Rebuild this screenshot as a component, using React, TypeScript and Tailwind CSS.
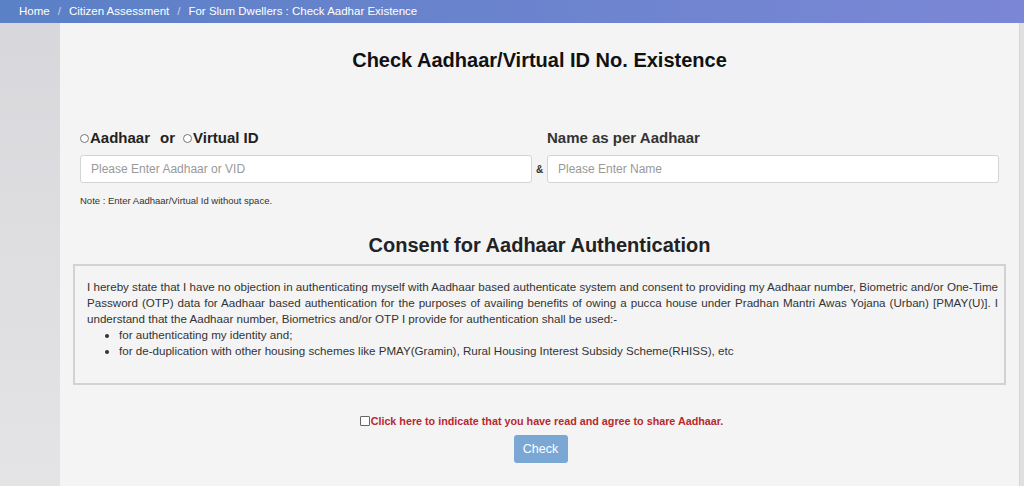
export default function App() {
  return (
    <div className="flex flex-col w-[1024px] h-[486px] overflow-hidden bg-[#dcdcdf] font-['Liberation_Sans',Arial,sans-serif]">
      <div className="flex items-center h-[23px] px-[19px] bg-gradient-to-r from-[#5a80c6] to-[#7b87d6] text-white text-[11.5px] shadow-[0_1px_3px_rgba(0,0,0,0.3)]">
        <span>Home</span>
        <span className="mx-[8px] text-[#c9d4ee]">/</span>
        <span>Citizen Assessment</span>
        <span className="mx-[8px] text-[#c9d4ee]">/</span>
        <span>For Slum Dwellers : Check Aadhar Existence</span>
      </div>
      <div className="flex flex-1">
        <div className="w-[60px] bg-gradient-to-b from-[#d8d8dc] to-[#e4e4e6]"></div>
        <div className="flex flex-col w-[960px] bg-[#f4f4f4] border-r border-[#d6d6d6]">
          <h1 className="text-center font-bold text-[20px] leading-[28px] text-[#111] mt-[23px]">Check Aadhaar/Virtual ID No. Existence</h1>
          <div className="flex mt-[55px] px-[20px]">
            <div className="flex flex-col w-[453px]">
              <div className="flex items-center h-[18px] font-bold text-[15px] text-[#222]">
                <span className="inline-block w-[9px] h-[9px] rounded-full border border-[#777] bg-white mr-[1px]"></span>
                <span>Aadhaar</span>
                <span className="ml-[10px] mr-[8px]">or</span>
                <span className="inline-block w-[9px] h-[9px] rounded-full border border-[#777] bg-white mr-[1px]"></span>
                <span>Virtual ID</span>
              </div>
              <div className="flex items-center mt-[8px] h-[28px] bg-white border border-[#d4d4d4] rounded-[3px] px-[10px] text-[12px] text-[#999]">Please Enter Aadhaar or VID</div>
              <div className="mt-[11px] h-[14px] flex items-center text-[9.5px] text-[#333]">Note : Enter Aadhaar/Virtual Id without space.</div>
            </div>
            <div className="w-[15px] flex flex-col">
              <div className="h-[26px]"></div>
              <div className="flex items-center justify-center h-[28px] text-[10px] font-bold text-[#333]">&amp;</div>
            </div>
            <div className="flex flex-col w-[453px]">
              <div className="flex items-center h-[18px] font-bold text-[15px] text-[#333]">Name as per Aadhaar</div>
              <div className="flex items-center mt-[8px] h-[28px] bg-white border border-[#d4d4d4] rounded-[3px] px-[10px] text-[12px] text-[#999]">Please Enter Name</div>
            </div>
          </div>
          <h2 className="text-center font-bold text-[20px] leading-[28px] text-[#222] mt-[23px]">Consent for Aadhaar Authentication</h2>
          <div className="mx-[13px] mt-[5px] h-[121px] border-2 border-[#d2d2d2] pl-[12px] pr-[6px] pt-[13px] text-[11.6px] leading-[16px] text-[#333] text-justify">
            <p>I hereby state that I have no objection in authenticating myself with Aadhaar based authenticate system and consent to providing my Aadhaar number, Biometric and/or One-Time Password (OTP) data for Aadhaar based authentication for the purposes of availing benefits of owing a pucca house under Pradhan Mantri Awas Yojana (Urban) [PMAY(U)]. I understand that the Aadhaar number, Biometrics and/or OTP I provide for authentication shall be used:-</p>
            <ul className="list-disc pl-[32px] text-left">
              <li>for authenticating my identity and;</li>
              <li>for de-duplication with other housing schemes like PMAY(Gramin), Rural Housing Interest Subsidy Scheme(RHISS), etc</li>
            </ul>
          </div>
          <div className="flex items-center justify-center h-[14px] mt-[29px] ml-[4px] text-[10.75px] font-bold text-[#b8292f]">
            <span className="inline-block w-[10px] h-[10px] border border-[#666] bg-white rounded-[1px] mr-[1px]"></span>
            <span>Click here to indicate that you have read and agree to share Aadhaar.</span>
          </div>
          <div className="flex justify-center mt-[7px] ml-[2px]">
            <button className="w-[54px] h-[28px] rounded-[3px] bg-[#7aa7d3] text-white text-[12.5px]">Check</button>
          </div>
        </div>
        <div className="flex-1 bg-[#e0e0e2]"></div>
      </div>
    </div>
  );
}
